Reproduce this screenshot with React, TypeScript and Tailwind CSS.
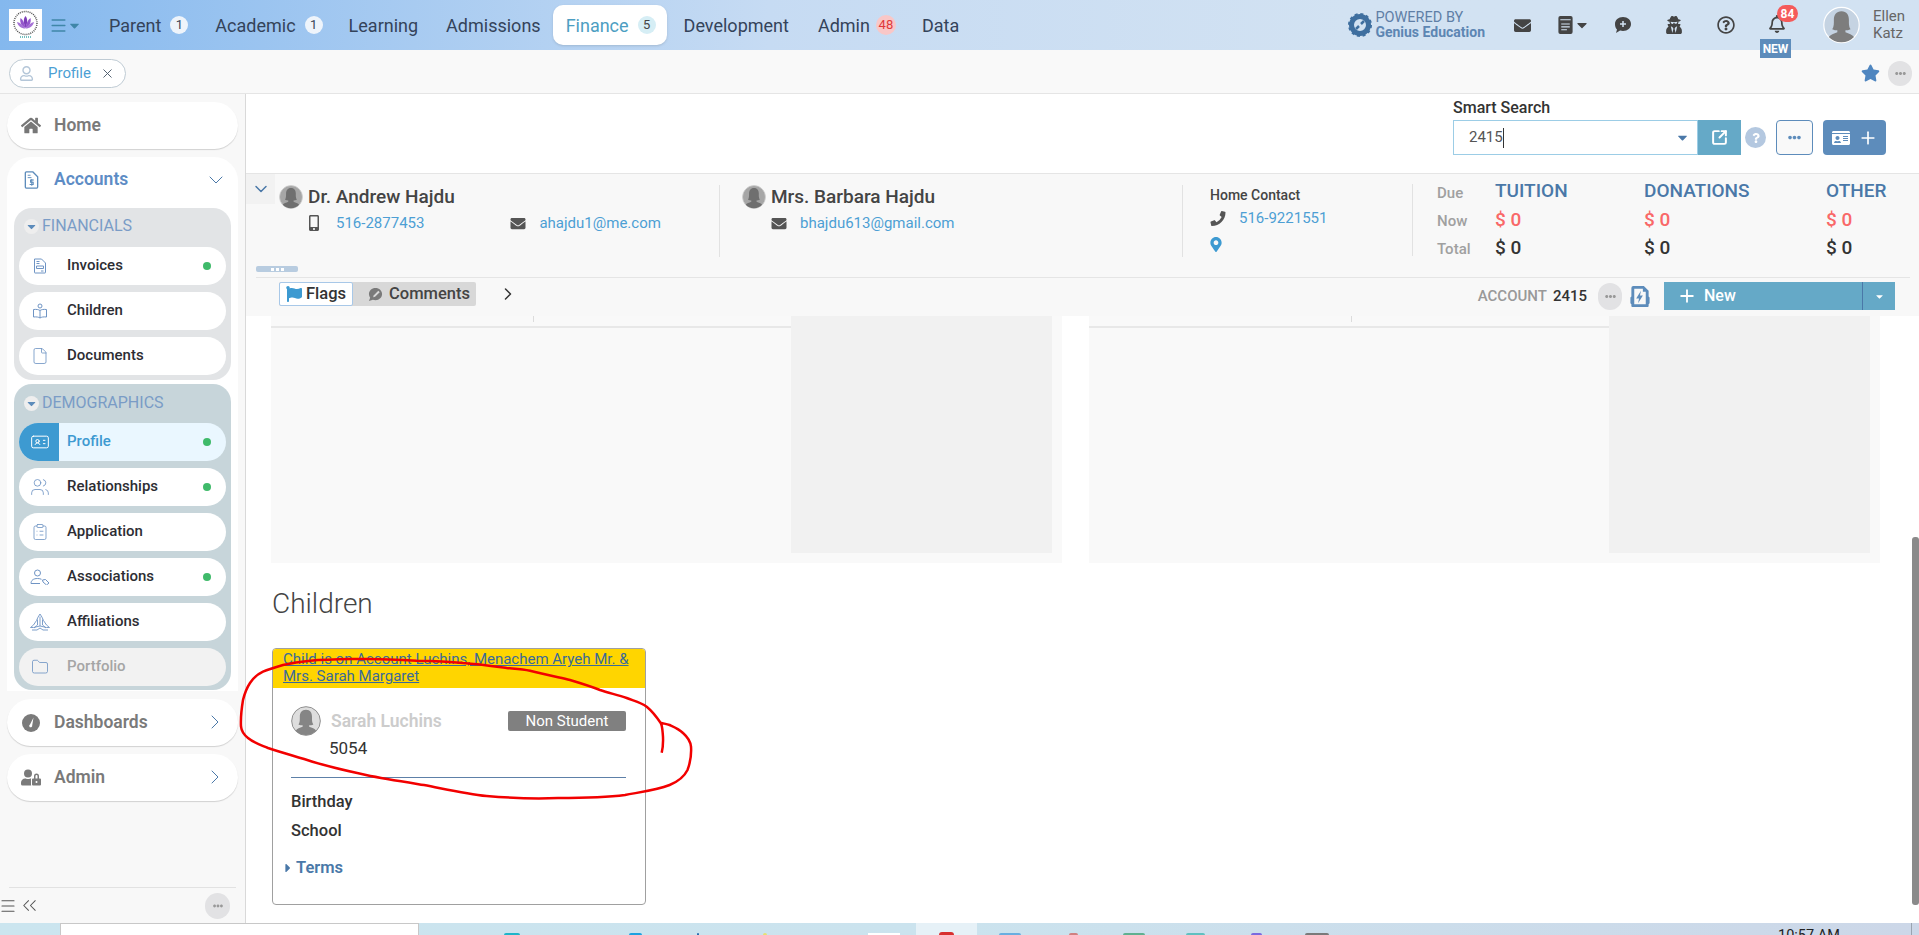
import { ChevronDown, ChevronRight, ChevronsLeft, Menu, X, File, IdCard, Users, ClipboardList, Folder, Plus, SquareArrowOutUpRight } from 'lucide-react'
import { FaHome, FaEnvelope, FaUserSecret, FaRegBell, FaRegQuestionCircle, FaPhoneAlt, FaMapMarkerAlt, FaMobileAlt, FaStar, FaFlag, FaCaretDown, FaCaretRight, FaUserLock, FaEllipsisH, FaQuestion, FaRegUser, FaIdCard } from 'react-icons/fa'

const avatarTones = {
  top: { bg: '#c5d3e2', ring: '#ffffff', shape: '#7d7d7d' },
  dark: { bg: '#a6a6a6', ring: '#d0d0d0', shape: '#6f6f6f' },
  light: { bg: '#dedede', ring: '#8a8a8a', shape: '#858585' },
}

const Avatar = ({ size = 'w-6 h-6', tone = 'dark' }: { size?: string; tone?: 'top' | 'dark' | 'light' }) => {
  const t = avatarTones[tone]
  return (
    <svg viewBox="0 0 32 32" className={size}>
      <circle cx="16" cy="16" r="15.3" fill={t.bg} stroke={t.ring} strokeWidth="1" />
      <path d="M16 4c-4.600 0-6.600 3.400-6.600 7.400 0 3 .2 6-1.400 8.200 1.600.8 3 1 4.400 1v1.600c-3 1.200-6 2-7.400 4.200A15 15 0 0 0 16 31c4.200 0 8-1.700 10.800-4.600-1.400-2.200-4.400-3-7.400-4.200v-1.600c1.400 0 2.800-.2 4.400-1-1.600-2.200-1.400-5.200-1.400-8.200C22.400 7.400 20.600 4 16 4z" fill={t.shape} />
    </svg>
  )
}

const LogoMark = () => (
  <div className="flex h-[32px] w-[33px] items-center justify-center bg-white">
    <svg viewBox="0 0 33 32" className="h-[32px] w-[33px]">
      <circle cx="16.500" cy="14" r="11.500" fill="none" stroke="#555" strokeWidth="1.500" strokeDasharray="1 1" />
      <path d="M16.500 7c2 2.500 2.500 6 0 12-2.500-6-2-9.500 0-12z" fill="#7d3fb8" />
      <path d="M11.500 9c2.500 1.500 4 5 5 10-4-2-6-5.500-5-10zM21.500 9c-2.500 1.500-4 5-5 10 4-2 6-5.500 5-10z" fill="#9556cc" />
      <path d="M8 13c3 .5 6 3 8.500 6.500C12 19.500 9 17 8 13zM25 13c-3 .5-6 3-8.500 6.500C21 19.500 24 17 25 13z" fill="#a673d6" />
      <path d="M11 28h11" stroke="#4aa" strokeWidth="1.500" strokeDasharray="1 1" />
    </svg>
  </div>
)

const GeniusMark = () => (
  <svg viewBox="0 0 24 24" className="h-[24px] w-[24px]">
    <circle cx="12" cy="12" r="8.500" fill="none" stroke="#3f6f9f" strokeWidth="5" />
    <circle cx="12" cy="12" r="11" fill="none" stroke="#3f6f9f" strokeWidth="2" strokeDasharray="3 2.760" />
    <path d="M8 16l3-3M13 11l3-3" stroke="#3f6f9f" strokeWidth="2.500" />
  </svg>
)

const DocMenuIcon = () => (
  <svg viewBox="0 0 15 19" className="h-[18px] w-[15px]">
    <path d="M2 0h11a2 2 0 0 1 2 2v15a2 2 0 0 1-2 2H2a2 2 0 0 1-2-2V2a2 2 0 0 1 2-2z" fill="#444" />
    <path d="M2 4h11M3 8.500h9M3 11.500h9M3 14.500h6" stroke="#d2e2f2" strokeWidth="1.200" />
  </svg>
)

const ChatPlusIcon = () => (
  <svg viewBox="0 0 18 18" className="h-[18px] w-[18px]">
    <path d="M9 1c4.700 0 8 3 8 7s-3.300 7-8 7c-1 0-2-.1-2.900-.4L2 17l1-3.500C1.700 12.300 1 10.300 1 8c0-4 3.300-7 8-7z" fill="#444" />
    <path d="M9 5v6M6 8h6" stroke="#d2e2f2" strokeWidth="1.500" />
  </svg>
)

const AccountsIcon = () => (
  <svg viewBox="0 0 15 19" className="h-[18px] w-[15px]" fill="none" stroke="#5d8cbb" strokeWidth="1.400">
    <path d="M2 1h7l5 5v11a1 1 0 0 1-1 1H2a1 1 0 0 1-1-1V2a1 1 0 0 1 1-1z" />
    <path d="M3.500 4.500h3M3.500 7h4" strokeWidth="1" />
    <path d="M10 9.500H6.500v2.300h2.800v2.400H5.500M7.800 8.500v7" strokeWidth="1.100" />
  </svg>
)

const InvoiceIcon = () => (
  <svg viewBox="0 0 14 16" className="h-[16px] w-[14px]" fill="none" stroke="#6f94c4" strokeWidth="1">
    <path d="M1.500 1h7l4 4v9.500a.5.5 0 0 1-.5.5H2a.5.5 0 0 1-.5-.5z" />
    <path d="M3.500 3.500h3M3.500 5.500h3M3.500 8h7v2.500h-7zM8 13h2.500" />
  </svg>
)

const ChildBookIcon = () => (
  <svg viewBox="0 0 16 16" className="h-[16px] w-[16px]" fill="none" stroke="#6f94c4" strokeWidth="1">
    <circle cx="8" cy="3" r="2" />
    <path d="M8 7.500c-1.500-1-3.500-1.300-6.500-1v7.500c3-.3 5 0 6.500 1 1.500-1 3.500-1.300 6.500-1V6.500c-3-.3-5 0-6.500 1zM8 7.500V15" />
  </svg>
)

const PersonTagIcon = () => (
  <svg viewBox="0 0 20 16" className="h-[16px] w-[20px]" fill="none" stroke="#6f94c4" strokeWidth="1">
    <circle cx="7.500" cy="4" r="3" />
    <path d="M1 14.500c0-3.300 2.500-5 6.500-5 1.500 0 3 .3 4 .8M1 14.500h9" />
    <path d="M12.500 11l3-.5 3.500 3.500-2.500 2-3.500-3z" />
  </svg>
)

const PrayingHandsIcon = () => (
  <svg viewBox="0 0 20 18" className="h-[18px] w-[20px]" fill="none" stroke="#6f94c4" strokeWidth="0.900">
    <path d="M10 1C8.500 3 7.500 5 6.500 7.500L3.500 12 .5 14.500M10 1c1.500 2 2.500 4 3.500 6.500l3 4.500 3 2.500" />
    <path d="M10 3.500V13M7.500 6.500v5.500l-3.500 3M12.500 6.500v5.500l3.500 3" />
    <path d="M.5 14.500h3l6.500-1.500 6.500 1.500h3M2 17h5l3-2 3 2h5" />
  </svg>
)

const GaugeIcon = () => (
  <svg viewBox="0 0 18 18" className="h-[18px] w-[18px]">
    <circle cx="9" cy="9" r="9" fill="#7a7a7a" />
    <path d="M11.500 3.500L8 10.500a1.500 1.500 0 1 0 2.200 1z" fill="#fff" />
  </svg>
)

const PowerDocIcon = () => (
  <svg viewBox="0 0 20 24" className="h-[23px] w-[20px]">
    <path d="M3 1h11l5 5v6l1 1v6l-1 1v2a1 1 0 0 1-1 1H2a1 1 0 0 1-1-1v-2l-1-1v-6l1-1V3a2 2 0 0 1 2-2z" fill="#5d8cbb" />
    <path d="M4 4h9v3h3v13H4z" fill="#f8f8f8" />
    <path d="M11 6l-5 8h3l-1 5 5-8h-3z" fill="#5d8cbb" />
  </svg>
)

const CommentPenIcon = () => (
  <svg viewBox="0 0 16 16" className="h-[15px] w-[15px]">
    <path d="M8 1c4 0 7 2.800 7 6.500S12 14 8 14c-1 0-2-.2-2.800-.5L1 15l1.300-3.500C1.500 10.300 1 9 1 7.500 1 3.800 4 1 8 1z" fill="#7a7a7a" />
    <path d="M11 4L6 9l-.5 2 2-.5 5-5z" fill="#d8d8d8" />
  </svg>
)

const Badge = ({ n, active = false }: { n: string; active?: boolean }) => (
  <span className={`ml-[9px] flex h-[18px] w-[18px] items-center justify-center rounded-full text-[13px] ${active ? 'bg-[#d6eef5] text-[#444]' : 'bg-[#eef4fb] text-[#3a4658]'}`}>{n}</span>
)

const NavItem = ({ label, badge, cls = '' }: { label: string; badge?: string; cls?: string }) => (
  <div className={`flex h-[40px] items-center px-[13px] ${cls}`}>
    <span className="text-[18px] text-[#34435a]">{label}</span>
    {badge && <Badge n={badge} />}
  </div>
)

const TopBar = () => (
  <div className="flex h-[50px] shrink-0 items-center bg-gradient-to-r from-[#84b8ee] via-[#c6dbf3] via-[40%] to-[#d2e2f2] to-[70%] pl-[9px] pr-[6px]">
    <LogoMark />
    <Menu className="ml-[7px] h-[19px] w-[19px] text-[#3f86a8]" strokeWidth={1.800} />
    <FaCaretDown className="ml-[-1px] h-[15px] w-[15px] text-[#3f86a8]" />
    <div className="ml-[14px] flex items-center">
      <NavItem label="Parent" badge="1" cls="mr-[1px]" />
      <NavItem label="Academic" badge="1" />
      <NavItem label="Learning" cls="mr-[2px]" />
      <NavItem label="Admissions" />
      <div className="ml-[-1px] mr-[4px] flex h-[40px] items-center rounded-[10px] bg-white pl-[13px] pr-[11px] shadow-sm">
        <span className="text-[18px] text-[#4d9ec2]">Finance</span>
        <Badge n="5" active />
      </div>
      <NavItem label="Development" cls="mr-[6px]" />
      <div className="flex h-[40px] items-center pl-[10px] pr-[13px]">
        <span className="text-[18px] text-[#34435a]">Admin</span>
        <span className="ml-[6px] flex h-[20px] w-[20px] items-center justify-center rounded-full bg-[#f9c7c7] text-[13px] text-[#e03a3a]">48</span>
      </div>
      <NavItem label="Data" />
    </div>
    <div className="ml-auto flex items-center">
      <GeniusMark />
      <div className="ml-[3px] flex flex-col leading-[14px]">
        <span className="text-[14.5px] text-[#5f7fa6]">POWERED BY</span>
        <span className="text-[14px] font-bold text-[#5d86b3]">Genius Education</span>
      </div>
      <FaEnvelope className="ml-[29px] h-[17px] w-[17px] text-[#444]" />
      <div className="ml-[27px] flex items-center">
        <DocMenuIcon />
        <FaCaretDown className="ml-[3px] h-[16px] w-[12px] text-[#444]" />
      </div>
      <div className="ml-[26px]"><ChatPlusIcon /></div>
      <FaUserSecret className="ml-[34px] h-[18px] w-[16px] text-[#444]" />
      <FaRegQuestionCircle className="ml-[35px] h-[18px] w-[18px] text-[#444]" />
      <div className="relative ml-[33px] h-[20px] w-[18px]">
        <FaRegBell className="h-[18px] w-[18px] text-[#444]" />
        <span className="absolute left-[9px] top-[-10px] flex h-[17px] w-[21px] items-center justify-center rounded-full bg-[#f55b5b] text-[12px] font-bold text-white">84</span>
        <span className="absolute left-[-8px] top-[24px] z-10 flex h-[19px] w-[31px] items-center justify-center bg-[#5d8cbb] text-[12px] font-bold text-white">NEW</span>
      </div>
      <div className="ml-[37px]"><Avatar size="w-[37px] h-[38px]" tone="top" /></div>
      <div className="ml-[13px] flex w-[40px] flex-col text-[15px] leading-[17px] text-[#666]">
        <span>Ellen</span>
        <span>Katz</span>
      </div>
    </div>
  </div>
)

const SubBar = () => (
  <div className="flex h-[44px] shrink-0 items-center border-b border-[#e5e5e5] bg-[#f9f9f9] pl-[9px] pr-[7px] pt-[3px]">
    <div className="mt-[1px] flex h-[29px] w-[117px] items-center rounded-full border border-[#bfcbd4] bg-white pl-[9px]">
      <FaRegUser className="h-[15px] w-[15px] text-[#b4c6d8]" />
      <span className="ml-[14px] text-[15px] text-[#4d9fd4]">Profile</span>
      <X className="ml-[9px] h-[15px] w-[15px] text-[#4a5a6a]" strokeWidth={1.500} />
    </div>
    <FaStar className="ml-auto h-[18px] w-[19px] text-[#4f86c0]" />
    <div className="ml-[8px] flex h-[25px] w-[24px] items-center justify-center rounded-full bg-[#e2e2e4]">
      <FaEllipsisH className="h-[11px] w-[11px] text-[#999]" />
    </div>
  </div>
)

const SideItem = ({ icon, label, dot = false, active = false, muted = false }: { icon: React.ReactNode; label: string; dot?: boolean; active?: boolean; muted?: boolean }) => (
  <div className={`flex h-[38px] items-center overflow-hidden rounded-full ${active ? 'bg-[#eaf7ff]' : muted ? 'bg-[#f2f2f2]' : 'bg-white'}`}>
    <div className={`flex h-full w-[40px] items-center justify-center pl-[2px] ${active ? 'bg-[#3d9ad1]' : ''}`}>{icon}</div>
    <span className={`ml-[8px] pb-[2px] text-[15px] font-medium ${active ? 'text-[#3d9ad1]' : muted ? 'text-[#a5a5a5]' : 'text-[#2d2d33]'}`}>{label}</span>
    {dot && <span className="ml-auto mr-[15px] h-[8px] w-[8px] rounded-full bg-[#3fba6a]" />}
  </div>
)

const GroupLabel = ({ label, cls = 'pb-[1px]' }: { label: string; cls?: string }) => (
  <div className={`flex h-[39px] items-center pl-[5px] ${cls}`}>
    <span className="flex h-[15px] w-[15px] items-center justify-center rounded-full bg-[#eeeeee]">
      <FaCaretDown className="h-[13px] w-[13px] text-[#5d8cbb]" />
    </span>
    <span className="ml-[3px] text-[16px] text-[#7a9cc6]">{label}</span>
  </div>
)

const PillLink = ({ icon, label, tone = 'text-[#7a7a7a]' }: { icon: React.ReactNode; label: string; tone?: string }) => (
  <div className="flex h-[47px] items-center rounded-[24px] bg-white pl-[14px] shadow-[0_1px_1px_rgba(0,0,0,0.16)]">
    <div className="flex w-[20px] justify-center">{icon}</div>
    <span className={`ml-[13px] text-[17.5px] font-semibold ${tone}`}>{label}</span>
  </div>
)

const Sidebar = () => (
  <div className="flex w-[246px] shrink-0 flex-col border-r border-[#d9d9d9] bg-[#f8f8f8] px-[7px] pt-[8px]">
    <PillLink icon={<FaHome className="h-[19px] w-[21px] text-[#777]" />} label="Home" />
    <div className="mt-[8px] w-[231px] rounded-t-[24px] bg-white pb-[1px]">
      <div className="flex h-[51px] items-center pb-[6px] pl-[14px] pr-[10px]">
        <div className="flex w-[20px] justify-center"><AccountsIcon /></div>
        <span className="ml-[13px] text-[17.5px] font-semibold text-[#5d8cc5]">Accounts</span>
        <ChevronDown className="ml-auto h-[24px] w-[24px] text-[#4a78a8]" strokeWidth={1} />
      </div>
      <div className="mx-[7px] rounded-[18px] bg-[#e2e4e6] px-[5px] pb-[5px]">
        <GroupLabel label="FINANCIALS" cls="pb-[3px]" />
        <div className="flex flex-col gap-[7px]">
          <SideItem icon={<InvoiceIcon />} label="Invoices" dot />
          <SideItem icon={<ChildBookIcon />} label="Children" />
          <SideItem icon={<File className="h-[18px] w-[18px] text-[#6f94c4]" strokeWidth={1.100} />} label="Documents" />
        </div>
      </div>
      <div className="mx-[7px] mt-[4px] rounded-[18px] bg-[#c7d5da] px-[5px] pb-[4px]">
        <GroupLabel label="DEMOGRAPHICS" />
        <div className="flex flex-col gap-[7px]">
          <SideItem icon={<IdCard className="h-[20px] w-[20px] text-white" strokeWidth={1.200} />} label="Profile" dot active />
          <SideItem icon={<Users className="h-[20px] w-[22px] text-[#6f94c4]" strokeWidth={1} />} label="Relationships" dot />
          <SideItem icon={<ClipboardList className="h-[18px] w-[18px] text-[#6f94c4]" strokeWidth={1.100} />} label="Application" />
          <SideItem icon={<PersonTagIcon />} label="Associations" dot />
          <SideItem icon={<PrayingHandsIcon />} label="Affiliations" />
          <SideItem icon={<Folder className="h-[18px] w-[20px] text-[#6f94c4]" strokeWidth={1.100} />} label="Portfolio" muted />
        </div>
      </div>
    </div>
    <div className="mt-[8px] flex flex-col gap-[8px]">
      <div className="relative">
        <PillLink icon={<GaugeIcon />} label="Dashboards" />
        <ChevronRight className="absolute right-[11px] top-[11px] h-[24px] w-[24px] text-[#4a78a8]" strokeWidth={1} />
      </div>
      <div className="relative">
        <PillLink icon={<FaUserLock className="h-[17px] w-[23px] text-[#7a7a7a]" />} label="Admin" />
        <ChevronRight className="absolute right-[11px] top-[11px] h-[24px] w-[24px] text-[#4a78a8]" strokeWidth={1} />
      </div>
    </div>
    <div className="mt-auto ml-[2px] flex h-[36px] w-[227px] items-center border-t border-[#e2e2e2]">
      <Menu className="ml-[-10px] h-[18px] w-[18px] text-[#555]" strokeWidth={1.500} />
      <ChevronsLeft className="ml-[1px] h-[23px] w-[23px] text-[#555]" strokeWidth={1.100} />
      <div className="ml-auto mr-[6px] flex h-[26px] w-[25px] items-center justify-center rounded-full bg-[#e2e2e4]">
        <FaEllipsisH className="h-[10px] w-[10px] text-[#999]" />
      </div>
    </div>
  </div>
)

const Person = ({ name, children }: { name: string; children: React.ReactNode }) => (
  <div>
    <div className="flex items-center">
      <Avatar />
      <span className="ml-[5px] text-[19px] leading-[24px] font-medium text-[#444]">{name}</span>
    </div>
    <div className="mt-[3px] flex items-center text-[15px] text-[#4d9fd4]">{children}</div>
  </div>
)

const AmountCol = ({ title, w }: { title: string; w: string }) => (
  <div className={`flex flex-col ${w}`}>
    <span className="h-[28px] text-[19px] font-medium leading-[24px] text-[#4a78a8]">{title}</span>
    <span className="h-[28px] text-[19px] font-medium leading-[26px] text-[#f96868]">$ 0</span>
    <span className="h-[28px] text-[19px] font-medium leading-[26px] text-[#333]">$ 0</span>
  </div>
)

const AccountHeader = () => (
  <div className="h-[143px] shrink-0 border-t border-[#e5e5e5] bg-[#f8f8f8]">
    <div className="relative flex h-[103px]">
      <div className="flex h-[30px] w-[29px] items-center justify-center bg-[#f2f2f2]">
        <ChevronDown className="h-[20px] w-[20px] text-[#4a78a8]" strokeWidth={1.800} />
      </div>
      <div className="ml-[4px] mt-[11px] h-[72px] w-[441px] border-r border-[#e2e2e2]">
        <Person name="Dr. Andrew Hajdu">
          <FaMobileAlt className="ml-[29px] h-[16px] w-[12px] text-[#555]" />
          <span className="ml-[16px]">516-2877453</span>
          <FaEnvelope className="ml-[86px] h-[15px] w-[16px] text-[#555]" />
          <span className="ml-[13px]">ahajdu1@me.com</span>
        </Person>
      </div>
      <div className="mt-[11px] h-[72px] w-[463px] border-r border-[#e2e2e2] pl-[22px]">
        <Person name="Mrs. Barbara Hajdu">
          <FaEnvelope className="ml-[29px] h-[15px] w-[16px] text-[#555]" />
          <span className="ml-[13px]">bhajdu613@gmail.com</span>
        </Person>
      </div>
      <div className="mt-[10px] h-[72px] w-[230px] border-r border-[#e2e2e2] pl-[27px]">
        <div className="text-[14px] font-medium leading-[22px] text-[#444]">Home Contact</div>
        <div className="mt-[1px] flex items-center text-[15px] text-[#4d9fd4]">
          <FaPhoneAlt className="h-[15px] w-[16px] scale-x-[-1] text-[#555]" />
          <span className="ml-[13px]">516-9221551</span>
        </div>
        <FaMapMarkerAlt className="mt-[7px] h-[15px] w-[12px] text-[#3d9ad1]" />
      </div>
      <div className="mt-[5px] flex pl-[24px]">
        <div className="flex w-[58px] flex-col text-[15px] font-medium leading-[28px] text-[#a0a0a0]">
          <span>Due</span>
          <span>Now</span>
          <span>Total</span>
        </div>
        <AmountCol title="TUITION" w="w-[149px]" />
        <AmountCol title="DONATIONS" w="w-[182px]" />
        <AmountCol title="OTHER" w="w-[70px]" />
      </div>
      <div className="absolute bottom-[5px] left-[10px] flex h-[6px] w-[42px] items-center justify-center gap-[2px] rounded-[2px] bg-[#b8cce0]">
        <span className="h-[3px] w-[3px] bg-white" />
        <span className="h-[3px] w-[3px] bg-white" />
        <span className="h-[3px] w-[3px] bg-white" />
      </div>
    </div>
    <div className="ml-[10px] mr-[9px] flex h-[39px] items-start border-t border-[#e5e5e5] pl-[23px] pr-[15px] pt-[4px]">
      <div className="flex h-[24px] rounded-[2px] bg-[#d8d8d8] text-[16.5px] font-medium">
        <div className="flex w-[74px] items-center rounded-[2px] border border-[#a8c8e8] bg-white pl-[5px] text-[#333]">
          <FaFlag className="h-[16px] w-[18px] text-[#3d9ad1]" />
          <span className="ml-[3px]">Flags</span>
        </div>
        <div className="flex w-[123px] items-center pl-[15px] text-[#444]">
          <CommentPenIcon />
          <span className="ml-[6px]">Comments</span>
        </div>
      </div>
      <ChevronRight className="ml-[22px] mt-[2px] h-[20px] w-[20px] text-[#333]" strokeWidth={1.800} />
      <div className="ml-auto flex items-center text-[15px] font-medium">
        <span className="text-[#999]">ACCOUNT</span>
        <span className="ml-[6px] text-[#333]">2415</span>
        <div className="ml-[11px] flex h-[27px] w-[24px] items-center justify-center rounded-full bg-[#e2e2e4]">
          <FaEllipsisH className="h-[11px] w-[11px] text-[#999]" />
        </div>
        <div className="ml-[8px]"><PowerDocIcon /></div>
        <div className="ml-[14px] flex h-[28px] w-[231px] bg-[#65a9c7] text-white">
          <div className="flex w-[199px] items-center border-r border-[#4a78a8] pl-[13px]">
            <Plus className="h-[20px] w-[20px]" strokeWidth={2.200} />
            <span className="ml-[7px] text-[16px]">New</span>
          </div>
          <div className="flex flex-1 items-center justify-center">
            <FaCaretDown className="h-[11px] w-[11px]" />
          </div>
        </div>
      </div>
    </div>
  </div>
)

const SmartSearch = () => (
  <div className="flex h-[79px] shrink-0 justify-end pr-[33px] pt-[4px]">
    <div className="flex flex-col">
      <span className="text-[16px] font-medium leading-[20px] text-[#333]">Smart Search</span>
      <div className="mt-[2px] flex h-[35px] w-[433px] items-center">
        <div className="flex h-full w-[245px] items-center border border-[#9ccde6] bg-white pl-[15px] text-[15px] text-[#555]">
          <span>2415</span>
          <span className="h-[20px] w-px bg-[#333]" />
          <FaCaretDown className="ml-auto mr-[7px] h-[15px] w-[15px] text-[#4a78a8]" />
        </div>
        <div className="flex h-full w-[43px] items-center justify-center bg-[#65a9c7]">
          <SquareArrowOutUpRight className="h-[17px] w-[17px] text-white" strokeWidth={2.800} />
        </div>
        <div className="ml-[4px] flex h-[21px] w-[21px] items-center justify-center rounded-full bg-[#b4c8e0]">
          <FaQuestion className="h-[10px] w-[10px] text-white" />
        </div>
        <div className="ml-[10px] flex h-full w-[37px] items-center justify-center rounded-[4px] border border-[#5d8cbb] bg-[#f9f9f9]">
          <FaEllipsisH className="h-[13px] w-[13px] text-[#5d8cbb]" />
        </div>
        <div className="ml-[10px] flex h-full w-[63px] items-center justify-center gap-[7px] rounded-[4px] bg-[#5d8cbb] text-white">
          <FaIdCard className="h-[16px] w-[20px]" />
          <Plus className="h-[20px] w-[20px]" strokeWidth={2} />
        </div>
      </div>
    </div>
  </div>
)

const EmptyPanel = () => (
  <div className="flex h-[247px] flex-1 bg-[#f9f9f9] pb-[10px] pr-[10px]">
    <div className="relative flex-1">
      <div className="h-[12px] border-b-2 border-[#e8e8e8]" />
      <span className="absolute left-[262px] top-0 h-[6px] w-px bg-[#dcdcdc]" />
    </div>
    <div className="w-[261px] bg-[#f1f1f1]" />
  </div>
)

const ChildCard = () => (
  <div className="ml-[26px] mt-[29px] h-[257px] w-[374px] overflow-hidden rounded-[4px] border border-[#a0a0a0] bg-white">
    <div className="h-[39px] bg-[#ffd500] pl-[10px] pt-[2px] text-[15px] leading-[17px] text-[#3a6a9a] underline">
      Child is on Account Luchins, Menachem Aryeh Mr. &amp;<br />Mrs. Sarah Margaret
    </div>
    <div className="pl-[18px] pr-[19px] pt-[18px]">
      <div className="flex items-center">
        <Avatar size="w-[30px] h-[30px]" tone="light" />
        <span className="ml-[10px] text-[17.5px] font-semibold text-[#cccccc]">Sarah Luchins</span>
        <span className="ml-auto flex h-[20px] w-[118px] items-center justify-center rounded-[2px] bg-[#808080] text-[15px] text-white">Non Student</span>
      </div>
      <div className="ml-[38px] mt-[2px] text-[17px] leading-[20px] text-[#333]">5054</div>
      <div className="mt-[19px] border-t border-[#5d80a8]" />
      <div className="mt-[14px] text-[16.5px] font-medium leading-[20px] text-[#333]">Birthday</div>
      <div className="mt-[9px] text-[16.5px] font-medium leading-[20px] text-[#333]">School</div>
      <div className="ml-[-8px] mt-[17px] flex items-center text-[#4a78a8]">
        <FaCaretRight className="h-[14px] w-[10px]" />
        <span className="ml-[3px] text-[16.5px] font-semibold leading-[20px]">Terms</span>
      </div>
    </div>
  </div>
)

const Scribble = () => (
  <svg className="pointer-events-none absolute left-0 top-0 h-[935px] w-[1919px]" viewBox="0 0 1919 935" fill="none">
    <path
      d="M661.700 752.700C663.500 745 663.200 738 662.700 733C662.300 728 662 725 660.700 723C656 716 652 711 646.700 706.700C640 702 634 701 626.700 698C618 695 609 693 600 690C590 686 580 683 570 680C557 677 543 674 530 670.700C522 669 514 668.700 506.700 668C492 666 478 664 463 663C447 661.500 432 661 416.700 660.700C397 659.500 376 658.500 356.700 659C341 659.300 325 659.500 310 660.700C300 661.500 291 663 283 665C276 667 269 669 263 671.700C258 674 254 677 250 683C246 689 244.500 694 243 700C241.500 709 240.500 718 241 726.700C241.500 731 244 735 248 738C254 743 261 745 268 748C283 753 298 757 312.500 761.700C330 767 348 771 366 775C385 779 405 782 424 785C445 789 466 794 486.600 796C510 798 534 799 558 798C580 798 603 798 625 795C641 792 657 790 669.600 785C677 782 684 777 687.500 770C690.500 762 691.500 754 691 746.700C690.500 741 687.500 737 683 733C679 729 674 727 669.600 725C666.500 724 663.500 723.500 660.700 722.700"
      stroke="#f20000"
      strokeWidth="2.500"
    />
  </svg>
)

const trayIcons = [
  { ml: 'ml-[85px]', w: 'w-[16px]', c: 'bg-[#1fb5c9]' },
  { ml: 'ml-[109px]', w: 'w-[13px]', c: 'bg-[#1da1e0]' },
  { ml: 'ml-[55px]', w: 'w-[2px]', c: 'bg-[#2a6fb0]' },
  { ml: 'ml-[64px]', w: 'w-[4px]', c: 'bg-[#e8e070]' },
]

const tailIcons = [
  { ml: 'ml-[22px]', w: 'w-[22px]', c: 'bg-[#6aaee0]' },
  { ml: 'ml-[48px]', w: 'w-[9px]', c: 'bg-[#d08080]' },
  { ml: 'ml-[45px]', w: 'w-[22px]', c: 'bg-[#60b090]' },
  { ml: 'ml-[41px]', w: 'w-[19px]', c: 'bg-[#60c0c0]' },
  { ml: 'ml-[46px]', w: 'w-[11px]', c: 'bg-[#7a6ae0]' },
  { ml: 'ml-[43px]', w: 'w-[24px]', c: 'bg-[#7a7a7a]' },
]

const Taskbar = () => (
  <div className="flex h-[12px] shrink-0 items-start overflow-hidden bg-gradient-to-r from-[#cbe5ef] via-[#cbe3ee] to-[#ccd7e8]">
    <div className="ml-[60px] h-[12px] w-[359px] border-l border-r border-t border-[#c8c8c8] bg-white" />
    {trayIcons.map((t) => (
      <span key={t.ml} className={`${t.ml} mt-[10px] h-[2px] ${t.w} rounded-t-full ${t.c}`} />
    ))}
    <span className="ml-[101px] mt-[10px] h-[2px] w-[32px] bg-white" />
    <div className="ml-[16px] flex h-[12px] w-[61px] justify-center bg-[#e6f1f7] pt-[9px]">
      <span className="h-[3px] w-[15px] rounded-t-full bg-[#d83030]" />
    </div>
    {tailIcons.map((t) => (
      <span key={t.ml + t.c} className={`${t.ml} mt-[10px] h-[2px] ${t.w} rounded-t-[2px] ${t.c}`} />
    ))}
    <span className="ml-[449px] mt-[5px] text-[14.5px] leading-[15px] text-[#222]">10:57 AM</span>
    <span className="ml-[71px] h-[12px] w-px bg-[#9aa4b0]" />
  </div>
)

export default function App() {
  return (
    <div className="relative flex h-screen w-full flex-col overflow-hidden bg-white font-['Roboto',sans-serif]">
      <TopBar />
      <SubBar />
      <div className="flex min-h-0 flex-1">
        <Sidebar />
        <div className="relative flex min-w-0 flex-1 flex-col">
          <SmartSearch />
          <AccountHeader />
          <div className="ml-[25px] mr-[39px] flex gap-[27px]">
            <EmptyPanel />
            <EmptyPanel />
          </div>
          <h2 className="ml-[26px] mt-[26px] text-[28px] font-light leading-[30px] text-[#444]">Children</h2>
          <ChildCard />
          <div className="absolute right-0 top-[443px] h-[368px] w-[7px] rounded-[3px] bg-[#8a8a8a]" />
        </div>
      </div>
      <Taskbar />
      <Scribble />
    </div>
  )
}
